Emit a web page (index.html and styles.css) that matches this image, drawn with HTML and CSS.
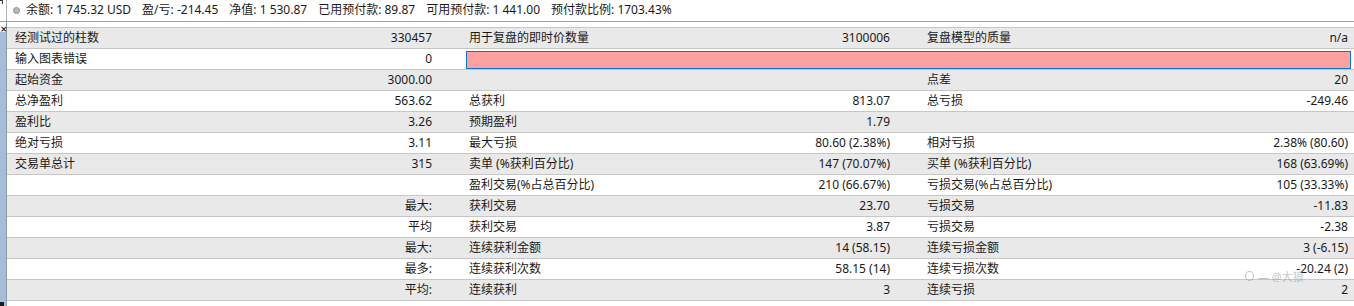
FILE: index.html
```html
<!DOCTYPE html>
<html lang="zh">
<head>
<meta charset="utf-8">
<link rel="stylesheet" href="styles.css">
</head>
<body>
<div class="app">
  <div class="topbar">
    <div class="tb-edge"><span class="tb-mark"></span></div>
    <span class="dot"></span>
    <div class="tb-items">
      <span>余额: 1 745.32 USD</span>
      <span>盈/亏: -214.45</span>
      <span>净值: 1 530.87</span>
      <span>已用预付款: 89.87</span>
      <span>可用预付款: 1 441.00</span>
      <span>预付款比例: 1703.43%</span>
    </div>
  </div>
  <div class="main">
    <div class="side"><span class="side-x">×</span><span class="side-foot"></span></div>
    <div class="report">
      <div class="row g">
        <div class="grp"><span>经测试过的柱数</span><span>330457</span></div><div></div>
        <div class="grp"><span>用于复盘的即时价数量</span><span>3100006</span></div><div></div>
        <div class="grp"><span>复盘模型的质量</span><span>n/a</span></div>
      </div>
      <div class="row">
        <div class="grp"><span>输入图表错误</span><span>0</span></div><div></div>
        <div class="pink"></div>
      </div>
      <div class="row g">
        <div class="grp"><span>起始资金</span><span>3000.00</span></div><div></div>
        <div class="grp"></div><div></div>
        <div class="grp"><span>点差</span><span>20</span></div>
      </div>
      <div class="row">
        <div class="grp"><span>总净盈利</span><span>563.62</span></div><div></div>
        <div class="grp"><span>总获利</span><span>813.07</span></div><div></div>
        <div class="grp"><span>总亏损</span><span>-249.46</span></div>
      </div>
      <div class="row g">
        <div class="grp"><span>盈利比</span><span>3.26</span></div><div></div>
        <div class="grp"><span>预期盈利</span><span>1.79</span></div><div></div>
        <div class="grp"></div>
      </div>
      <div class="row">
        <div class="grp"><span>绝对亏损</span><span>3.11</span></div><div></div>
        <div class="grp"><span>最大亏损</span><span>80.60 (2.38%)</span></div><div></div>
        <div class="grp"><span>相对亏损</span><span>2.38% (80.60)</span></div>
      </div>
      <div class="row g">
        <div class="grp"><span>交易单总计</span><span>315</span></div><div></div>
        <div class="grp"><span>卖单 (%获利百分比)</span><span>147 (70.07%)</span></div><div></div>
        <div class="grp"><span>买单 (%获利百分比)</span><span>168 (63.69%)</span></div>
      </div>
      <div class="row">
        <div class="grp"></div><div></div>
        <div class="grp"><span>盈利交易(%占总百分比)</span><span>210 (66.67%)</span></div><div></div>
        <div class="grp"><span>亏损交易(%占总百分比)</span><span>105 (33.33%)</span></div>
      </div>
      <div class="row g">
        <div class="grp"><span></span><span>最大:</span></div><div></div>
        <div class="grp"><span>获利交易</span><span>23.70</span></div><div></div>
        <div class="grp"><span>亏损交易</span><span>-11.83</span></div>
      </div>
      <div class="row">
        <div class="grp"><span></span><span>平均</span></div><div></div>
        <div class="grp"><span>获利交易</span><span>3.87</span></div><div></div>
        <div class="grp"><span>亏损交易</span><span>-2.38</span></div>
      </div>
      <div class="row g">
        <div class="grp"><span></span><span>最大:</span></div><div></div>
        <div class="grp"><span>连续获利金额</span><span>14 (58.15)</span></div><div></div>
        <div class="grp"><span>连续亏损金额</span><span>3 (-6.15)</span></div>
      </div>
      <div class="row">
        <div class="grp"><span></span><span>最多:</span></div><div></div>
        <div class="grp"><span>连续获利次数</span><span>58.15 (14)</span></div><div></div>
        <div class="grp"><span>连续亏损次数</span><span>-20.24 (2)</span></div>
      </div>
      <div class="row g">
        <div class="grp"><span></span><span>平均:</span></div><div></div>
        <div class="grp"><span>连续获利</span><span>3</span></div><div></div>
        <div class="grp"><span>连续亏损</span><span>2</span></div>
      </div>
      <div class="watermark"><span class="wm-icon"></span>—&nbsp;@大狼</div>
    </div>
  </div>
</div>
</body>
</html>
```

FILE: styles.css
```css
* { box-sizing: border-box; }
html, body { margin: 0; padding: 0; background: #ffffff; }
body {
  font-family: "Noto Sans", "Noto Sans CJK SC", sans-serif;
  font-size: 12px;
  color: #1a1a1a;
  width: 1354px;
  height: 306px;
  overflow: hidden;
}
.app { display: flex; flex-direction: column; height: 306px; }

.topbar {
  height: 22px;
  display: flex;
  align-items: center;
  background: #ffffff;
  border-bottom: 1px solid #a0a0a0;
}
.tb-edge {
  width: 7px;
  height: 21px;
  border-right: 1px solid #b4b4b4;
  position: relative;
}
.tb-mark {
  position: absolute;
  left: 0; top: 0;
  width: 3px; height: 4px;
  border-top: 1px solid #333;
  border-right: 1px solid #333;
}
.dot {
  width: 7px; height: 7px;
  margin-left: 6px;
  margin-top: -1px;
  border-radius: 50%;
  background: #b8b8b8;
  border: 1px solid #8e8e8e;
}
.tb-items {
  margin-left: 6px;
  display: flex;
  gap: 11px;
  line-height: 20px;
  margin-top: -1px;
  white-space: nowrap;
}

.main { flex: 1; display: flex; }
.side {
  width: 7px;
  background: linear-gradient(#ffffff 0 10px, #a6bdd9 10px);
  border-right: 1px solid #8a98aa;
  position: relative;
}
.side-x {
  position: absolute;
  left: 0; top: 3px;
  font-size: 9px;
  line-height: 9px;
  font-weight: bold;
  color: #222;
  font-family: "DejaVu Sans", sans-serif;
}
.side-foot {
  position: absolute;
  left: 0; bottom: 0;
  width: 4px; height: 4px;
  background: #1a1a1a;
}

.report {
  flex: 1;
  padding-top: 5px;
  background: #ffffff;
  position: relative;
}
.report::before {
  content: "";
  display: block;
  height: 1px;
  background: #c6c6c6;
}
.row {
  display: grid;
  grid-template-columns: 428px 31px 427px 31px 427px;
  height: 21px;
  border-bottom: 1px solid #c6c6c6;
  background: #ffffff;
  align-items: center;
}
.row.g { background: #e9e9e9; }
.grp {
  display: flex;
  justify-content: space-between;
  align-items: center;
  padding: 0 3px;
  white-space: nowrap;
  line-height: 20px;
}
.row > .grp:first-child { padding-left: 8px; }
.pink {
  grid-column: 3 / 6;
  height: 18px;
  margin-top: 1px;
  background: #ffa0a0;
  border: 1px solid #0a78d2;
}
.watermark {
  position: absolute;
  left: 1238px;
  top: 246px;
  color: rgba(140, 140, 140, 0.5);
  font-size: 11px;
  display: flex;
  align-items: center;
  gap: 4px;
}
.wm-icon {
  width: 9px; height: 10px;
  border: 1px solid rgba(140, 140, 140, 0.5);
  border-radius: 50%;
}
```
